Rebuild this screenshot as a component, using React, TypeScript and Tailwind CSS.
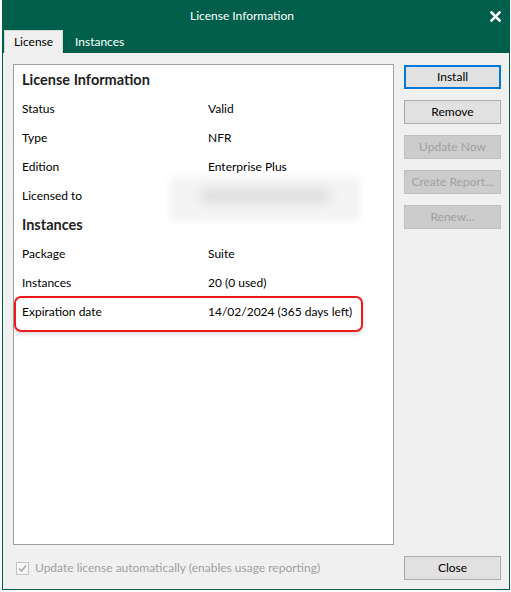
const font = { fontFamily: 'Lato, "Noto Sans", sans-serif' };

type Row = { label: string; value?: string; blurred?: boolean; highlight?: boolean };

const licenseRows: Row[] = [
  { label: "Status", value: "Valid" },
  { label: "Type", value: "NFR" },
  { label: "Edition", value: "Enterprise Plus" },
  { label: "Licensed to", blurred: true },
];

const instanceRows: Row[] = [
  { label: "Package", value: "Suite" },
  { label: "Instances", value: "20 (0 used)" },
  { label: "Expiration date", value: "14/02/2024 (365 days left)", highlight: true },
];

const buttons = [
  { label: "Install", primary: true },
  { label: "Remove" },
  { label: "Update Now", disabled: true },
  { label: "Create Report...", disabled: true },
  { label: "Renew...", disabled: true },
];

function InfoRow({ row }: { row: Row }) {
  return (
    <div className="relative flex h-[29px] items-center pl-[8px] text-[12px] text-black">
      {row.highlight && (
        <span className="absolute left-0 top-[-1px] h-[36px] w-[349px] rounded-[7px] border-2 border-[#f01818] shadow-[0_2px_4px_rgba(0,0,0,0.15)]" />
      )}
      <span className="w-[186px]">{row.label}</span>
      {row.blurred ? (
        <span className="relative h-[29px] w-[190px]">
          <span className="absolute left-[-36px] top-[-4px] h-[44px] w-[190px] bg-[#f4f4f4] blur-[3px]" />
          <span className="absolute left-[-6px] top-[8px] h-[14px] w-[130px] rounded-full bg-[#dcdcdc] blur-[6px]" />
        </span>
      ) : (
        <span>{row.value}</span>
      )}
    </div>
  );
}

function Heading({ text }: { text: string }) {
  return (
    <div className="flex h-[29px] items-center pl-[8px] text-[14.5px] font-bold text-[#1e1e1e]">
      {text}
    </div>
  );
}

function DialogButton({ label, primary, disabled }: { label: string; primary?: boolean; disabled?: boolean }) {
  const cls = disabled
    ? "border border-[#bfbfbf] bg-[#cccccc] text-[#a0a0a0]"
    : primary
      ? "border-2 border-[#0078d7] bg-[#e1e1e1] text-black"
      : "border border-[#adadad] bg-[#e1e1e1] text-black";
  return (
    <div className={`flex h-[24px] w-[97px] items-center justify-center text-[12px] ${cls}`}>{label}</div>
  );
}

export default function App() {
  return (
    <div className="h-[592px] w-[511px] bg-white pl-[2px]" style={font}>
      <div className="flex h-[590px] w-[508px] flex-col border border-[#005f4b] bg-[#f0f0f0]">
        <div className="bg-[#005f4b]">
          <div className="relative flex h-[29px] items-center justify-center pr-[28px] text-[12px] text-white">
            License Information
            <svg className="absolute right-[8px] top-[10px]" width="11" height="11" viewBox="0 0 11 11">
              <path d="M1.5 1.5 L9.5 9.5 M9.5 1.5 L1.5 9.5" stroke="white" strokeWidth="2.6" strokeLinecap="square" />
            </svg>
          </div>
          <div className="flex h-[23px] items-end pl-[1px]">
            <div className="flex h-[23px] w-[59px] items-center justify-center border border-b-0 border-[#d9d9d9] bg-[#f0f0f0] text-[12px] text-black">
              License
            </div>
            <div className="flex h-[22px] items-center pl-[12px] text-[12px] text-white">Instances</div>
          </div>
        </div>

        <div className="flex flex-1 flex-col pb-[10px] pl-[10px] pr-[8px] pt-[11px]">
          <div className="flex gap-[10px]">
            <div className="h-[481px] w-[381px] border border-[#a0a0a0] bg-white">
              <Heading text="License Information" />
              {licenseRows.map((row) => (
                <InfoRow key={row.label} row={row} />
              ))}
              <Heading text="Instances" />
              {instanceRows.map((row) => (
                <InfoRow key={row.label} row={row} />
              ))}
            </div>
            <div className="flex flex-col gap-[11px] pt-[1px]">
              {buttons.map((b) => (
                <DialogButton key={b.label} {...b} />
              ))}
            </div>
          </div>

          <div className="mt-[11px] flex items-center justify-between">
            <div className="flex items-center gap-[6px] pl-[3px] text-[12px] text-[#a0a0a0]">
              <span className="flex h-[13px] w-[13px] items-center justify-center border border-[#c4c4c4] bg-[#f7f7f7]">
                <svg width="9" height="9" viewBox="0 0 9 9">
                  <path d="M1 4.5 L3.5 7 L8 1.5" fill="none" stroke="#a8a8a8" strokeWidth="1.6" />
                </svg>
              </span>
              Update license automatically (enables usage reporting)
            </div>
            <DialogButton label="Close" />
          </div>
        </div>
      </div>
    </div>
  );
}
